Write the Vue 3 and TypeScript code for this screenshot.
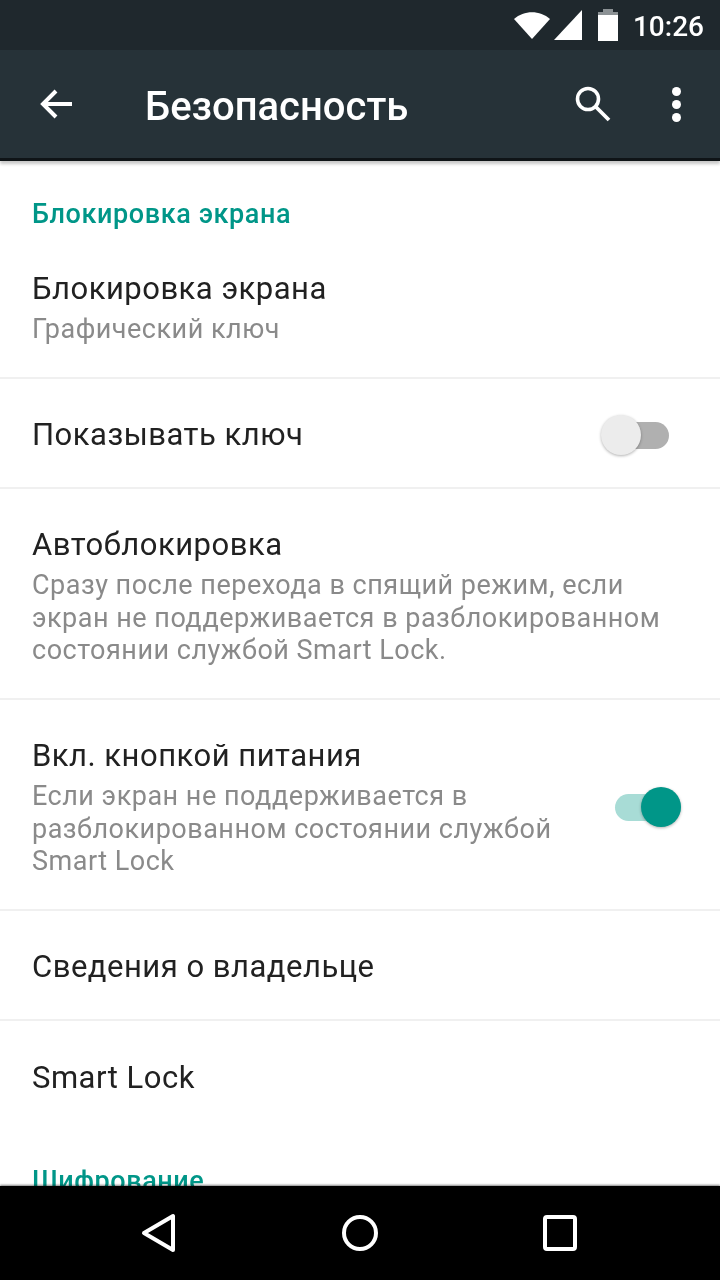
<script setup lang="ts">
import { ref } from 'vue'

type Row = { title: string; sub?: string; toggle?: 'on' | 'off' }

const rows = ref<Row[]>([
  { title: 'Блокировка экрана', sub: 'Графический ключ' },
  { title: 'Показывать ключ', toggle: 'off' },
  {
    title: 'Автоблокировка',
    sub: 'Сразу после перехода в спящий режим, если экран не поддерживается в разблокированном состоянии службой Smart Lock.',
  },
  {
    title: 'Вкл. кнопкой питания',
    sub: 'Если экран не поддерживается в разблокированном состоянии службой Smart Lock',
    toggle: 'on',
  },
  { title: 'Сведения о владельце' },
  { title: 'Smart Lock' },
])
</script>

<template>
  <div class="phone">
    <div class="status">
      <svg class="wifi" width="38" height="28" viewBox="0 0 38 28">
        <path d="M1 8 C11 -1 27 -1 37 8 L19 28 Z" fill="#fff" />
      </svg>
      <svg class="signal" width="30" height="32" viewBox="0 0 30 32">
        <path d="M29 1 V31 H1 Z" fill="#fff" />
      </svg>
      <svg class="battery" width="22" height="32" viewBox="0 0 22 32">
        <path d="M6 0 H16 V3 H21 V32 H1 V3 H6 Z" fill="#fff" />
        <path d="M6 0 H16 V3 H21 V6 H1 V3 H6 Z" fill="#8b9194" />
      </svg>
      <span class="time">10:26</span>
    </div>

    <header class="toolbar">
      <svg class="back" width="36" height="36" viewBox="0 0 36 36">
        <path d="M34 18 H6 M18 5 L5 18 L18 31" fill="none" stroke="#fff" stroke-width="4" />
      </svg>
      <h1 class="title">Безопасность</h1>
      <svg class="search" width="38" height="38" viewBox="0 0 38 38">
        <circle cx="14" cy="14" r="10.5" fill="none" stroke="#fff" stroke-width="3.6" />
        <path d="M22 22 L35 35" stroke="#fff" stroke-width="3.8" />
      </svg>
      <div class="more"><i></i><i></i><i></i></div>
    </header>

    <main class="list">
      <div class="section">Блокировка экрана</div>
      <div v-for="(row, i) in rows" :key="i" class="row" :class="{ last: i === rows.length - 1 }">
        <div class="text">
          <div class="row-title">{{ row.title }}</div>
          <div v-if="row.sub" class="row-sub">{{ row.sub }}</div>
        </div>
        <div v-if="row.toggle" class="switch" :class="row.toggle">
          <span class="track"></span>
          <span class="thumb"></span>
        </div>
      </div>
      <div class="section next">Шифрование</div>
    </main>

    <nav class="nav">
      <svg width="40" height="40" viewBox="0 0 40 40">
        <path d="M33 3 V37 L4 20 Z" fill="none" stroke="#fff" stroke-width="4" stroke-linejoin="round" />
      </svg>
      <svg width="40" height="40" viewBox="0 0 40 40">
        <circle cx="20" cy="20" r="16" fill="none" stroke="#fff" stroke-width="4" />
      </svg>
      <svg width="40" height="40" viewBox="0 0 40 40">
        <rect x="5" y="4" width="30" height="32" rx="2" fill="none" stroke="#fff" stroke-width="4" />
      </svg>
    </nav>
  </div>
</template>

<style>
html,
body {
  margin: 0;
  background: #fff;
}
</style>

<style scoped>
.phone {
  width: 720px;
  height: 1280px;
  display: flex;
  flex-direction: column;
  overflow: hidden;
  font-family: Roboto, "Noto Sans", sans-serif;
  background: #fff;
  filter: blur(0.6px);
}

.status {
  height: 50px;
  flex: none;
  background: #1f282d;
  display: flex;
  align-items: center;
  justify-content: flex-end;
  padding-right: 16px;
  box-sizing: border-box;
}

.wifi {
  margin-right: 2px;
}

.signal {
  margin-right: 14px;
}

.battery {
  margin-right: 14px;
}

.time {
  color: #fff;
  font-size: 28px;
  font-weight: 500;
  padding-top: 2px;
}

.toolbar {
  height: 108px;
  flex: none;
  background: #263238;
  border-bottom: 3px solid #0f1417;
  box-shadow: 0 3px 3px rgba(0, 0, 0, 0.22);
  position: relative;
  display: flex;
  align-items: center;
  padding-left: 38px;
  padding-right: 39px;
}

.title {
  margin: 5px 0 0 71px;
  flex: 1;
  color: #fff;
  font-size: 40px;
  font-weight: 500;
}

.search {
  margin-right: -1px;
}

.more {
  margin-left: 61px;
  display: flex;
  flex-direction: column;
  gap: 4px;
}

.more i {
  width: 9px;
  height: 9px;
  border-radius: 50%;
  background: #fff;
}

.list {
  flex: 1;
  min-height: 0;
  overflow: hidden;
}

.section {
  padding: 38px 32px 4px;
  color: #009688;
  font-size: 27px;
  font-weight: 500;
  line-height: 30px;
  letter-spacing: 0.6px;
}

.section.next {
  padding-top: 35px;
}

.row {
  display: flex;
  align-items: center;
  justify-content: space-between;
  gap: 24px;
  padding: 36px 39px 31.5px 32px;
  min-height: 110px;
  box-sizing: border-box;
  border-bottom: 2px solid #f0f0f0;
}

.row.last {
  border-bottom: 0;
}

.text {
  flex: 1;
  min-width: 0;
}

.row-title {
  color: #212121;
  font-size: 31px;
  line-height: 40px;
  letter-spacing: 0.5px;
}

.row-sub {
  margin-top: 4px;
  color: #8a8a8a;
  font-size: 27px;
  line-height: 32.5px;
  letter-spacing: 0.5px;
}

.switch {
  position: relative;
  flex: none;
  width: 68px;
  height: 40px;
}

.switch.off {
  margin-right: 12px;
}

.track {
  position: absolute;
  left: 2px;
  right: 0;
  top: 7px;
  height: 27px;
  border-radius: 14px;
  background: #b0b0b0;
}

.thumb {
  position: absolute;
  left: 0;
  top: 0;
  width: 40px;
  height: 40px;
  border-radius: 50%;
  background: #ececec;
  box-shadow: 0 1px 3px rgba(0, 0, 0, 0.3);
}

.switch.on .track {
  background: #a8dcd6;
}

.switch.on .thumb {
  left: 28px;
  background: #009688;
}

.nav {
  height: 94px;
  flex: none;
  background: #000;
  display: flex;
  align-items: center;
  justify-content: center;
  gap: 160px;
  position: relative;
  box-shadow: 0 -1px 2px rgba(0, 0, 0, 0.5);
}
</style>
